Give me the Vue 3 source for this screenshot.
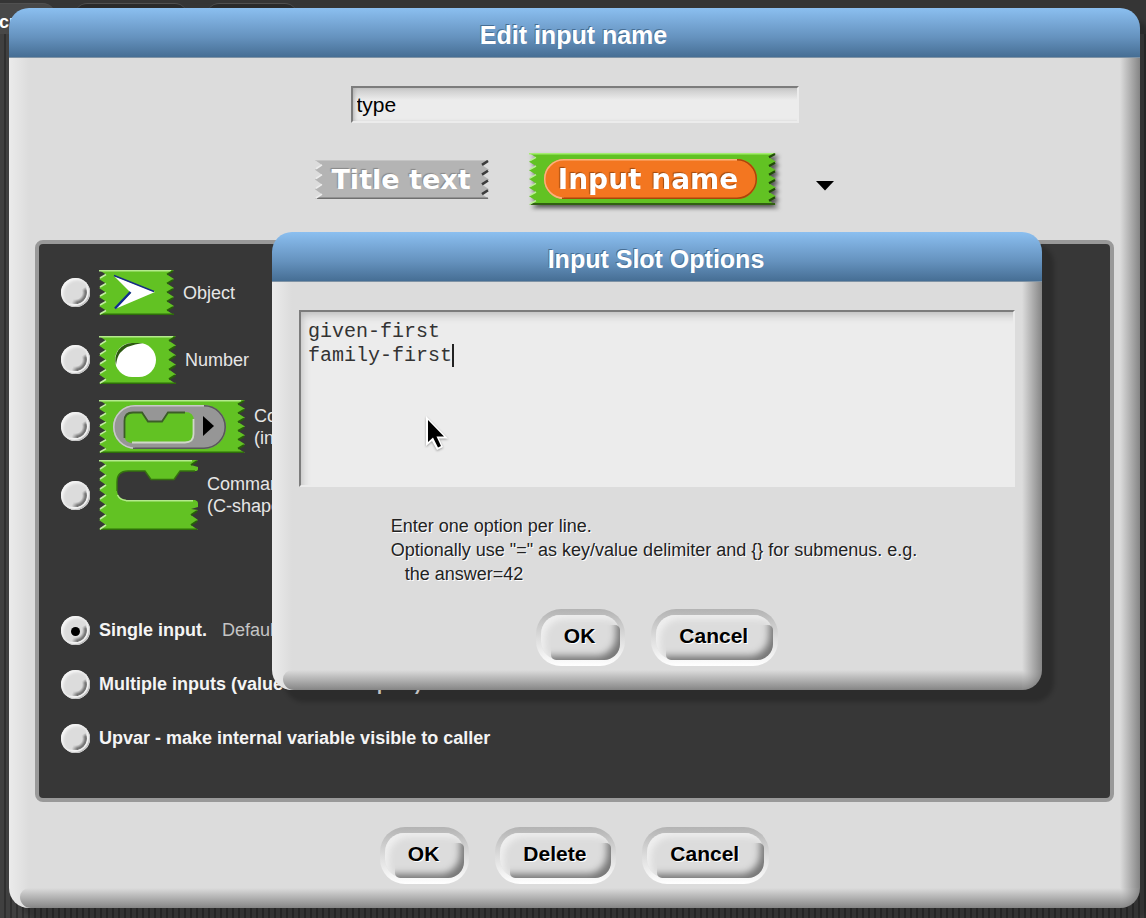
<script setup>
import { ref } from 'vue'

const fragment = ref('type')
const options = ref('given-first\nfamily-first')
const slotType = ref('')
const arity = ref('single')

const JAG = 7

// outline of a block with saw-tooth left and right sides
function outline(w, h, n) {
  const d = h / n
  let p = `M0 0H${w}`
  for (let i = 0; i < n; i++) p += `L${w - JAG} ${(i + 0.5) * d}L${w} ${(i + 1) * d}`
  p += `L0 ${h}`
  for (let i = n; i > 0; i--) p += `L${JAG} ${(i - 0.5) * d}L0 ${(i - 1) * d}`
  return p + 'Z'
}

// the bevel strokes on the teeth of one side
function teeth(side, w, h, n, from = 0) {
  const d = h / n
  let p = ''
  for (let i = from; i < n; i++) {
    p += side === 'left'
      ? `M${JAG} ${(i + 0.5) * d}L1 ${(i + 1) * d - 1}`
      : `M${w - 1} ${i * d + 1}L${w - JAG} ${(i + 0.5) * d}`
  }
  return p
}

const cShape = (() => {
  const d = 10
  let p = 'M0 0H99L92 5L99 7V9Q99 11 96 11H81L75 19H52L46 11H29Q18 11 18 22V29Q18 40 29 40H96Q99 41 99 43V47L92 49L99 50'
  for (let i = 5; i < 7; i++) p += `L92 ${(i + 0.5) * d}L99 ${(i + 1) * d}`
  p += 'L0 70'
  for (let i = 7; i > 0; i--) p += `L${JAG} ${(i - 0.5) * d}L0 ${(i - 1) * d}`
  return p + 'Z'
})()
</script>

<template>
  <div class="desktop">
    <div class="tabs" aria-hidden="true">
      <span class="tab first">cr</span>
      <span class="tab second"></span>
      <span class="tab third"></span>
    </div>

    <section class="dialog main" aria-labelledby="main-title">
      <h1 id="main-title" class="title">Edit input name</h1>
      <form class="body" @submit.prevent>
        <input v-model="fragment" class="field" type="text" aria-label="Input name" />

        <div class="kinds">
          <button type="button" class="kind">
            <svg width="174" height="39" viewBox="0 0 174 39">
              <path :d="outline(174, 39, 4)" fill="#b4b4b4" />
              <path d="M2 38.2H173" stroke="#6f6f6f" stroke-width="1.6" />
              <path d="M1 .5H172" stroke="#c4c4c4" />
              <path :d="teeth('left', 174, 39, 4)" stroke="#ececec" stroke-width="1.6" />
              <path :d="teeth('right', 174, 39, 4)" stroke="#3c3c3c" stroke-width="2.6" />
              <text class="kind-text pale" x="86" y="29">Title text</text>
            </svg>
          </button>
          <button type="button" class="kind lifted">
            <svg width="247" height="52" viewBox="0 0 247 52">
              <path :d="outline(247, 52, 6)" fill="#62c223" />
              <path d="M0 .8H246" stroke="#a4ee70" stroke-width="1.6" />
              <path d="M2 51H246" stroke="#315f12" stroke-width="2" />
              <path :d="teeth('left', 247, 52, 6)" stroke="#b9ef93" stroke-width="1.6" />
              <path :d="teeth('right', 247, 52, 6)" stroke="#214b08" stroke-width="2.2" />
              <rect x="15" y="6" width="213" height="40" rx="20" fill="#f37620" />
              <path d="M35 45.3A19.3 19.3 0 0 1 35 6.7H208" fill="none" stroke="#fbb27d" stroke-width="1.5" />
              <path d="M208 6.7A19.3 19.3 0 0 1 208 45.3H33" fill="none" stroke="#a9460a" stroke-width="1.5" />
              <text class="kind-text hot" x="119" y="36">Input name</text>
            </svg>
          </button>
          <button type="button" class="more" aria-label="Options">
            <svg width="18" height="10" viewBox="0 0 18 10"><path d="M0 0H18L9 9.5Z" /></svg>
          </button>
        </div>

        <div class="panel">
          <div class="types">
            <label class="choice">
              <input v-model="slotType" type="radio" name="slot" value="object" />
              <svg width="75" height="45" viewBox="0 0 75 45">
                <path :d="outline(75, 45, 5)" fill="#62c223" />
                <path d="M0 .8H72" stroke="#b4ea8c" stroke-width="1.6" />
                <path d="M2 44.2H75" stroke="#2e6f0a" stroke-width="1.6" />
                <path :d="teeth('left', 75, 45, 5)" stroke="#c3efa2" stroke-width="1.6" />
                <path :d="teeth('right', 75, 45, 5)" stroke="#286009" stroke-width="2" />
                <path d="M15 6L56 22L16 39L32 23Z" fill="#fff" />
                <path d="M15 5.5L55 21.5" stroke="#162c86" stroke-width="1.4" />
                <path d="M31.5 22L16 38.5" stroke="#102a92" stroke-width="2.4" />
              </svg>
              <span>Object</span>
            </label>
            <label class="choice">
              <input v-model="slotType" type="radio" name="slot" value="number" />
              <svg width="77" height="48" viewBox="0 0 77 48">
                <path :d="outline(77, 48, 5)" fill="#62c223" />
                <path d="M0 .8H74" stroke="#b4ea8c" stroke-width="1.6" />
                <path d="M2 47.2H77" stroke="#2e6f0a" stroke-width="1.6" />
                <path :d="teeth('left', 77, 48, 5)" stroke="#c3efa2" stroke-width="1.6" />
                <path :d="teeth('right', 77, 48, 5)" stroke="#286009" stroke-width="2" />
                <rect x="16" y="7" width="41" height="34" rx="17" fill="#fff" />
                <path d="M17 29A17 17 0 0 1 33 7H44Q27 9 21 17Q18 21 17 29Z" fill="#2c5a10" />
              </svg>
              <span>Number</span>
            </label>
            <label class="choice">
              <input v-model="slotType" type="radio" name="slot" value="inline" />
              <svg width="146" height="53" viewBox="0 0 146 53">
                <path :d="outline(146, 53, 6)" fill="#62c223" />
                <path d="M0 .8H142" stroke="#b4ea8c" stroke-width="1.6" />
                <path d="M2 52.2H145" stroke="#2e6f0a" stroke-width="1.6" />
                <path :d="teeth('left', 146, 53, 6)" stroke="#c3efa2" stroke-width="1.6" />
                <path :d="teeth('right', 146, 53, 6)" stroke="#286009" stroke-width="2" />
                <rect x="14" y="5" width="113" height="44" rx="22" fill="#969696" />
                <path d="M36 48.2A21.2 21.2 0 0 1 36 5.8H105" fill="none" stroke="#c9c9c9" stroke-width="1.6" />
                <path d="M105 5.8A21.2 21.2 0 0 1 105 48.2H34" fill="none" stroke="#595959" stroke-width="1.6" />
                <path d="M34 12H43L49 21H63L69 12H86Q95 12 95 21V34Q95 43 86 43H34Q25 43 25 34V21Q25 12 34 12Z" fill="#62c223" />
                <path d="M25.5 38V21Q25.500 12.500 34 12.500H43L49 21.500H63L69 12.500H86" fill="none" stroke="#3c5d28" stroke-width="1.8" />
                <path d="M94.500 19V34Q94.500 42.500 86 42.500H33" fill="none" stroke="#cfd8c9" stroke-width="1.8" />
                <path d="M104 16L115 26L104 36Z" />
              </svg>
              <span>Command<br />(inline)</span>
            </label>
            <label class="choice">
              <input v-model="slotType" type="radio" name="slot" value="c" />
              <svg width="99" height="70" viewBox="0 0 99 70">
                <path :d="cShape" fill="#62c223" />
                <path d="M0 .8H93M27 40.7H94" stroke="#b4ea8c" stroke-width="1.6" />
                <path d="M18.5 35Q21 40 27 40.5" fill="none" stroke="#b4ea8c" stroke-width="1.5" />
                <path d="M2 69.2H98" stroke="#2e6f0a" stroke-width="1.6" />
                <path d="M18 31V22Q18 11 29 11H46L52 19.5H75L81 11H96" fill="none" stroke="#35720f" stroke-width="1.4" />
                <path :d="teeth('left', 99, 70, 7)" stroke="#c3efa2" stroke-width="1.6" />
                <path d="M98 1L92 5" stroke="#286009" stroke-width="2" />
                <path :d="teeth('right', 99, 70, 7, 5)" stroke="#286009" stroke-width="2" />
              </svg>
              <span>Command<br />(C-shape)</span>
            </label>
          </div>

          <div class="arities">
            <label class="choice">
              <input v-model="arity" type="radio" name="arity" value="single" />
              <b>Single input.</b><span class="default">Default Value:</span>
            </label>
            <label class="choice">
              <input v-model="arity" type="radio" name="arity" value="multiple" />
              <b>Multiple inputs (value is list of inputs)</b>
            </label>
            <label class="choice">
              <input v-model="arity" type="radio" name="arity" value="upvar" />
              <b>Upvar - make internal variable visible to caller</b>
            </label>
          </div>
        </div>

        <div class="actions">
          <button class="push" type="button"><span>OK</span></button>
          <button class="push" type="button"><span>Delete</span></button>
          <button class="push" type="button"><span>Cancel</span></button>
        </div>
      </form>
    </section>

    <section class="dialog popup" role="dialog" aria-labelledby="popup-title">
      <h2 id="popup-title" class="title">Input Slot Options</h2>
      <form class="body" @submit.prevent>
        <div class="editor">
          <textarea v-model="options" aria-label="Options" spellcheck="false"></textarea>
          <i class="caret"></i>
          <svg class="pointer" width="26" height="36" viewBox="0 0 26 36">
            <path d="M3 1V31L9 26L14 35L20 32L16 23.5H25Z" fill="#fff" />
            <path d="M5 5V27L10 22.5L15 32.5L18 31L13.5 21.5H21Z" fill="#000" />
          </svg>
        </div>
        <p class="help">Enter one option per line.<br />Optionally use "=" as key/value delimiter and {} for submenus. e.g.<br /><span>the answer=42</span></p>
        <div class="actions">
          <button class="push" type="button"><span>OK</span></button>
          <button class="push" type="button"><span>Cancel</span></button>
        </div>
      </form>
    </section>
  </div>
</template>

<style>
body {
  margin: 0;
}
</style>

<style scoped>
.desktop {
  position: relative;
  box-sizing: border-box;
  min-height: 100vh;
  padding: 8px 6px 10px 9px;
  overflow: hidden;
  font-family: "Liberation Sans", Arial, Helvetica, sans-serif;
  background:
    linear-gradient(#353535, #353535) 0 0 / 100% 34px no-repeat,
    repeating-linear-gradient(to right, #404040 0 4px, #2f2f2f 4px 6px);
}
.tabs {
  position: absolute;
  top: 3px;
  left: 0;
  display: flex;
  gap: 20px;
}
.tab {
  box-sizing: border-box;
  height: 31px;
  border-top: 1px solid #505050;
  border-radius: 12px 12px 0 0;
  background: #2a2a2a;
}
.first {
  width: 55px;
  padding-top: 8px;
  border-top-left-radius: 0;
  background: #484848;
  color: #fff;
  font-size: 18px;
  font-weight: bold;
  line-height: 20px;
  text-indent: -1px;
}
.second { width: 112px; }
.third { width: 90px; }

.dialog {
  border-radius: 20px;
  box-shadow: 12px 12px 4px rgba(0, 0, 0, 0.2);
}
.main {
  position: relative;
}
.popup {
  position: absolute;
  top: 232px;
  left: 272px;
  right: 104px;
}
.title {
  margin: 0;
  height: 50px;
  box-sizing: border-box;
  padding: 3px 2px 0 0;
  border-bottom: 1px solid #7f93a5;
  border-radius: 20px 20px 0 0;
  background: linear-gradient(#8bbff0, #6592be 60%, #466e94);
  color: #fff;
  font-size: 25px;
  line-height: 48px;
  text-align: center;
  text-shadow: -1px -1px 0 #466e94;
}
.body {
  position: relative;
  display: flex;
  flex-direction: column;
  align-items: center;
  padding: 28px 26px 24px;
  border-radius: 0 0 20px 20px;
  background:
    radial-gradient(circle at 0 0, #dcdcdc 0, #888 20px) right bottom / 20px 20px no-repeat,
    linear-gradient(to right, #dcdcdc, #858585) right top / 20px calc(100% - 20px) no-repeat,
    linear-gradient(to right, #ebebeb, #dcdcdc) left top / 20px 100% no-repeat,
    #dcdcdc;
}
.body::after {
  content: "";
  position: absolute;
  left: 11px;
  right: 20px;
  bottom: 0;
  height: 20px;
  border-radius: 10px 0 0 12px;
  background: linear-gradient(#dcdcdc, #858585);
  pointer-events: none;
}

.field {
  box-sizing: border-box;
  width: 448px;
  height: 37px;
  padding: 0 4px;
  border: 2px solid #7c7c7c;
  border-right-color: #ececec;
  border-bottom-color: #ececec;
  outline: none;
  background: linear-gradient(#c8c8c8, #ececec 12px) padding-box;
  box-shadow: inset 3px 0 4px -2px #aaa;
  color: #000;
  font: 21px "Liberation Sans", Arial, sans-serif;
}
.kinds {
  display: flex;
  align-items: center;
  gap: 40px;
  margin-top: 30px;
}
button {
  margin: 0;
  padding: 0;
  border: 0;
  background: none;
}
svg { display: block; flex: none; }
.lifted { filter: drop-shadow(3px 3px 2px rgba(0, 0, 0, 0.6)); }
.more { padding-top: 14px; }
.kind-text {
  fill: #fff;
  font: bold 27px "DejaVu Sans", Verdana, sans-serif;
  text-anchor: middle;
}
.pale { text-shadow: -1px -1px 1px #888; }
.hot { font-size: 28px; text-shadow: -1px -1px 1px #a04a10; }

.panel {
  align-self: stretch;
  margin-top: 35px;
  padding: 15px 22px 33px;
  border: 4px solid #999;
  border-radius: 8px;
  background: #373737;
  color: #e6e6e6;
  font-size: 18px;
  line-height: 22px;
}
.choice {
  display: flex;
  align-items: center;
  gap: 9px;
  height: 54px;
}
.types .choice { height: 67px; }
.types .choice:last-child { height: 70px; }
.arities { margin-top: 73px; color: #f4f4f4; }
.default { margin-left: 6px; color: #c4c4c4; }
input[type="radio"] {
  appearance: none;
  position: relative;
  flex: none;
  width: 29px;
  height: 29px;
  margin: 0;
  border-radius: 50%;
  background: #dcdcdc;
  box-shadow:
    inset 2px 2px 3px #f8f8f8,
    inset -1px -1px 1px #bbb,
    inset -3px -3px 1px #f4f4f4;
}
input[type="radio"]::before {
  content: "";
  position: absolute;
  inset: 3px;
  border-radius: 50%;
  background: conic-gradient(from 60deg, transparent, #777 20deg 110deg, transparent 140deg);
  mask: radial-gradient(closest-side, transparent 58%, #000 85%);
}
input[type="radio"]:checked::after {
  content: "";
  position: absolute;
  inset: 11px 10px 9px 10px;
  border-radius: 50%;
  background: #000;
}

.actions {
  display: flex;
  gap: 26px;
  margin-top: 25px;
}
.popup .actions { margin-top: 23px; }
.push {
  position: relative;
  height: 57px;
  padding: 0 30px 3px 28px;
  border-radius: 25px;
  background: linear-gradient(#b3b3b3, #dcdcdc 50%, #fff);
  color: #000;
  font: bold 21px "Liberation Sans", Arial, sans-serif;
}
.push span {
  position: relative;
  z-index: 1;
  text-shadow: 1px 1px 0 #fff;
}
.push::before {
  content: "";
  position: absolute;
  inset: 6px 5px;
  border-radius: 19px;
  background: #dcdcdc;
  box-shadow: inset 5px 5px 6px -1px #efefef;
}
.push::after {
  content: "";
  position: absolute;
  inset: 16px 5px 6px 15px;
  border-radius: 5px 5px 16px 5px;
  box-shadow: inset -8px -8px 7px -4px #777;
}

.editor {
  position: relative;
  align-self: stretch;
  display: flex;
  margin: 0 1px;
}
textarea {
  box-sizing: border-box;
  flex: 1;
  height: 177px;
  margin: 0;
  padding: 8px 7px;
  border: 2px solid #7c7c7c;
  border-right-color: #ececec;
  border-bottom-color: #ececec;
  outline: none;
  resize: none;
  background: #ececec;
  box-shadow: inset 8px 10px 8px -7px #bbb;
  color: #333;
  font: 20px/24px "Liberation Mono", "Courier New", monospace;
}
.caret {
  position: absolute;
  top: 34px;
  left: 153px;
  width: 2px;
  height: 23px;
  background: #222;
}
.pointer {
  position: absolute;
  top: 105px;
  left: 124px;
  filter: drop-shadow(0 1px 1px rgba(0, 0, 0, 0.35));
}
.help {
  margin: 27px 0 0;
  padding-right: 6px;
  color: #222;
  font-size: 18px;
  line-height: 24px;
  text-shadow: 1px 1px 0 #fff;
}
.help span { padding-left: 14px; }
</style>
